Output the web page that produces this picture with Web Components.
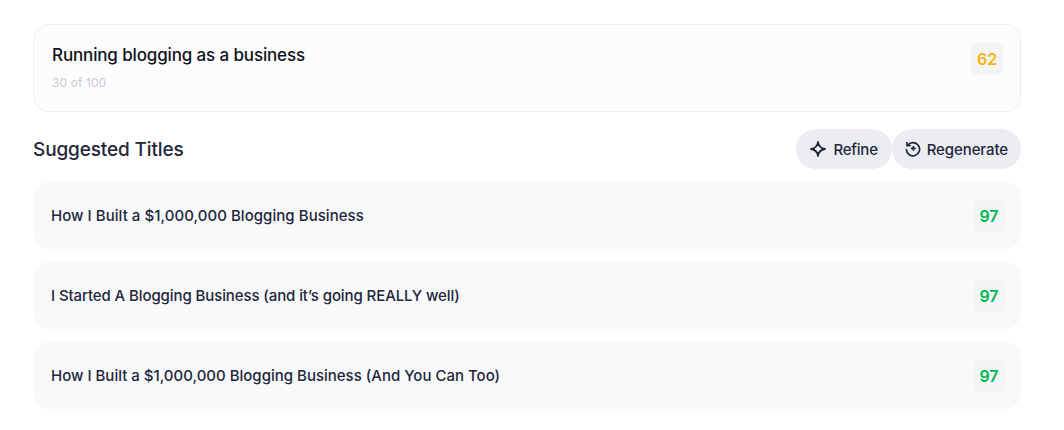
<!DOCTYPE html>
<html>
<head>
<meta charset="utf-8">
<title>Suggested Titles</title>
<style>
  html, body { margin: 0; background: #fff; }
  body { font-family: "Inter", "Liberation Sans", sans-serif; color: #1f2233; }
</style>
</head>
<body>
<title-page>
  <topic-card slot="topic" score="62" count="30 of 100">Running blogging as a business</topic-card>
  <section-head slot="head">Suggested Titles</section-head>
  <title-row score="97" style="letter-spacing: .05px">How I Built a $1,000,000 Blogging Business</title-row>
  <title-row score="97" style="letter-spacing: -.1px">I Started A Blogging Business (and it’s going REALLY well)</title-row>
  <title-row score="97">How I Built a $1,000,000 Blogging Business (And You Can Too)</title-row>
</title-page>

<script>
class TitlePage extends HTMLElement {
    constructor() {
        super();
        this.attachShadow({ mode: 'open' }).innerHTML = `
          <style>
            :host { display: block; width: 988px; padding: 24px 0 0 33px; }
            .head { display: block; margin: 17px 0 13px; }
            .rows { display: flex; flex-direction: column; gap: 13px; }
          </style>
          <slot name="topic"></slot>
          <div class="head"><slot name="head"></slot></div>
          <div class="rows"><slot></slot></div>`;
    }
}

class ScoreBadge extends HTMLElement {
    constructor() {
        super();
        this.attachShadow({ mode: 'open' }).innerHTML = `
          <style>
            :host { display: flex; align-items: center; justify-content: center; width: 32px; height: 32px;
              border-radius: 6px; background: #f3f4f6; font-size: 16px; font-weight: 600; letter-spacing: 0; color: var(--score-color, #00b853); }
          </style>
          <slot></slot>`;
    }
}

class TopicCard extends HTMLElement {
    constructor() {
        super();
        this.attachShadow({ mode: 'open' }).innerHTML = `
          <style>
            :host { display: flex; justify-content: space-between; box-sizing: border-box; height: 88px;
              padding: 18px 17px 0 18px; background: #fcfcfd; border: 1px solid #eceef2; border-radius: 16px; }
            .title { font-size: 17px; line-height: 24px; font-weight: 500; letter-spacing: -.14px; color: #10121c; }
            .count { margin-top: 8px; font-size: 12px; line-height: 16px; letter-spacing: .1px; color: #c6cad8; }
            score-badge { --score-color: #f5b50a; }
          </style>
          <div>
            <div class="title"><slot></slot></div>
            <div class="count">${this.getAttribute('count')}</div>
          </div>
          <score-badge>${this.getAttribute('score')}</score-badge>`;
    }
}

class PillButton extends HTMLElement {
    constructor() {
        super();
        this.attachShadow({ mode: 'open' }).innerHTML = `
          <style>
            :host { display: inline-flex; align-items: center; gap: var(--pill-gap, 6px); height: 40px; padding: 0 var(--pill-pad, 13px);
              border-radius: 20px; background: #ecedf3; font-size: 15px; font-weight: 500;
              letter-spacing: var(--pill-track, -.1px); color: #23263a; }
            ::slotted(svg) { display: block; width: 16px; height: 16px; }
          </style>
          <slot name="icon"></slot><slot></slot>`;
    }
}

class SectionHead extends HTMLElement {
    constructor() {
        super();
        this.attachShadow({ mode: 'open' }).innerHTML = `
          <style>
            :host { display: flex; align-items: center; justify-content: space-between; height: 40px; }
            .label { font-size: 19px; font-weight: 500; letter-spacing: -.14px; color: #23263a; }
            .actions { display: flex; }
            .refine { --pill-gap: 8px; --pill-pad: 14px; --pill-track: -.25px; }
          </style>
          <div class="label"><slot></slot></div>
          <div class="actions">
            <pill-button class="refine">
              <svg slot="icon" viewBox="0 0 16 16" fill="none" stroke="#23263a" stroke-width="1.8" stroke-linejoin="round">
                <path d="M8 1 C8.5 5 11 7.5 15 8 C11 8.5 8.5 11 8 15 C7.5 11 5 8.5 1 8 C5 7.5 7.5 5 8 1 Z"/>
              </svg>
              Refine
            </pill-button>
            <pill-button>
              <svg slot="icon" viewBox="0 0 16 16" fill="none" stroke="#23263a" stroke-width="1.7" stroke-linecap="round" stroke-linejoin="round">
                <path d="M2.8 4.2 A6.6 6.6 0 1 1 1.4 8.6"/>
                <path d="M2 1.6 V4.6 H5"/>
                <path d="M8.4 5.6 V9 M6.7 7.3 H10.1"/>
              </svg>
              Regenerate
            </pill-button>
          </div>`;
    }
}

class TitleRow extends HTMLElement {
    constructor() {
        super();
        this.attachShadow({ mode: 'open' }).innerHTML = `
          <style>
            :host { display: flex; align-items: center; justify-content: space-between; box-sizing: border-box;
              height: 67px; padding: 0 16px 0 18px; background: #f8f9fb; border-radius: 16px;
              font-size: 15px; font-weight: 500; color: #23263a; }
          </style>
          <div><slot></slot></div>
          <score-badge>${this.getAttribute('score')}</score-badge>`;
    }
}

customElements.define('score-badge', ScoreBadge);
customElements.define('pill-button', PillButton);
customElements.define('topic-card', TopicCard);
customElements.define('section-head', SectionHead);
customElements.define('title-row', TitleRow);
customElements.define('title-page', TitlePage);
</script>
</body>
</html>
